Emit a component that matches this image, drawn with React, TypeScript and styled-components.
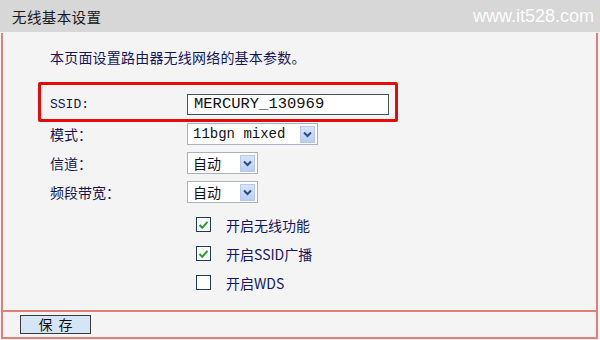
import React from 'react';
import styled, { createGlobalStyle } from 'styled-components';

const GlobalStyle = createGlobalStyle`
  html, body {
    margin: 0;
    padding: 0;
    background: #f4f4f4;
  }
  * {
    box-sizing: border-box;
  }
`;

const Page = styled.div`
  width: 600px;
  height: 340px;
  background: #f4f4f4;
  font-family: "Noto Sans CJK SC", "Noto Sans", sans-serif;
  font-size: 14px;
  color: #1b1b5c;
  display: flex;
  flex-direction: column;
  overflow: hidden;
`;

const TitleBar = styled.div`
  height: 32px;
  flex: none;
  background: #d7d7d7;
  display: flex;
  align-items: center;
  justify-content: space-between;
  padding: 0 6px 0 12px;
`;

const Title = styled.span`
  font-size: 14.5px;
  color: #1a1a1a;
  letter-spacing: 0.4px;
`;

const Watermark = styled.span`
  font-family: "Liberation Sans", Arial, sans-serif;
  font-size: 18px;
  color: #ffffff;
  opacity: 0.95;
`;

const Panel = styled.div`
  flex: 1;
  margin: 1px 2px 1px 1px;
  border-left: 2px solid #e08078;
  border-right: 2px solid #e08078;
  display: flex;
  flex-direction: column;
`;

const Content = styled.div`
  flex: 1;
  padding: 14px 0 0 35px;
`;

const Intro = styled.div`
  line-height: 20px;
  padding-left: 12px;
  letter-spacing: 0.2px;
  color: #16165a;
`;

const Highlight = styled.div`
  margin-top: 15px;
  width: 360px;
  border: 3px solid #e60a0a;
  border-radius: 2px;
  padding: 9px 0 4px 9px;
`;

const Row = styled.div<{ $h?: number }>`
  display: grid;
  grid-template-columns: 137px auto;
  align-items: start;
  height: ${(p) => p.$h ?? 29}px;
`;

const Rows = styled.div`
  padding-left: 12px;
  padding-top: 1px;
`;

const Label = styled.span<{ $mono?: boolean }>`
  font-family: ${(p) =>
    p.$mono ? '"Liberation Mono", monospace' : '"Noto Sans CJK SC", sans-serif'};
  font-size: ${(p) => (p.$mono ? 13 : 14)}px;
  line-height: ${(p) => (p.$mono ? 21 : 22)}px;
  color: #141450;
`;

const TextInput = styled.div`
  width: 202px;
  height: 21px;
  border: 1px solid #3e5656;
  background: #ffffff;
  font-family: "Liberation Mono", monospace;
  font-size: 15.5px;
  line-height: 19px;
  padding-left: 6px;
  color: #111;
`;

const Select = styled.div<{ $w: number }>`
  width: ${(p) => p.$w}px;
  height: 22px;
  border: 1px solid #a9b3bf;
  background: #ffffff;
  display: flex;
  align-items: center;
  justify-content: space-between;
  padding: 0 2px 0 5px;
`;

const SelectText = styled.span<{ $mono?: boolean }>`
  font-family: ${(p) =>
    p.$mono ? '"Liberation Mono", monospace' : '"Noto Sans CJK SC", sans-serif'};
  font-size: 14px;
  color: #111;
`;

const ArrowBox = styled.span`
  width: 15px;
  height: 17px;
  background: linear-gradient(#d9e4fb, #b8cdf5);
  border: 1px solid #b7c8ea;
  display: flex;
  align-items: center;
  justify-content: center;
`;

const Checks = styled.div`
  padding: 0 0 0 158px;
`;

const CheckRow = styled.div`
  display: flex;
  align-items: center;
  height: 29px;
  gap: 15px;
`;

const Box = styled.span`
  width: 15px;
  height: 15px;
  border: 1px solid #1f3b57;
  background: #ffffff;
  display: flex;
  align-items: center;
  justify-content: center;
`;

const CheckLabel = styled.span`
  font-size: 14px;
  color: #16165e;
`;

const Footer = styled.div`
  flex: none;
  height: 29px;
  border-top: 2px solid #e08078;
  border-bottom: 2px solid #e08078;
  display: flex;
  align-items: center;
  padding-left: 17px;
`;

const SaveButton = styled.button`
  width: 71px;
  height: 19px;
  background: #d3e5f7;
  border: 1px solid #3a3a3a;
  border-radius: 0;
  font-family: "Noto Sans CJK SC", sans-serif;
  font-size: 14px;
  line-height: 17px;
  color: #111;
  padding: 0;
  letter-spacing: 6px;
  text-indent: 6px;
`;

const Chevron = () => (
  <svg width="9" height="7" viewBox="0 0 9 7">
    <path d="M1 1.5 L4.5 5 L8 1.5" fill="none" stroke="#2b4a8c" strokeWidth="2" />
  </svg>
);

const Tick = () => (
  <svg width="11" height="10" viewBox="0 0 11 10">
    <path d="M1.5 5 L4.2 7.8 L9.5 1.8" fill="none" stroke="#22a02a" strokeWidth="2" />
  </svg>
);

const options = [
  { label: '开启无线功能', checked: true },
  { label: '开启SSID广播', checked: true },
  { label: '开启WDS', checked: false },
];

const App: React.FC = () => {
  return (
    <Page>
      <GlobalStyle />
      <TitleBar>
        <Title>无线基本设置</Title>
        <Watermark>www.it528.com</Watermark>
      </TitleBar>
      <Panel>
        <Content>
          <Intro>本页面设置路由器无线网络的基本参数。</Intro>
          <Highlight>
            <Row $h={21}>
              <Label $mono>SSID:</Label>
              <TextInput>MERCURY_130969</TextInput>
            </Row>
          </Highlight>
          <Rows>
            <Row>
              <Label>模式：</Label>
              <Select $w={131}>
                <SelectText $mono>11bgn mixed</SelectText>
                <ArrowBox><Chevron /></ArrowBox>
              </Select>
            </Row>
            <Row>
              <Label>信道：</Label>
              <Select $w={71}>
                <SelectText>自动</SelectText>
                <ArrowBox><Chevron /></ArrowBox>
              </Select>
            </Row>
            <Row>
              <Label>频段带宽：</Label>
              <Select $w={71}>
                <SelectText>自动</SelectText>
                <ArrowBox><Chevron /></ArrowBox>
              </Select>
            </Row>
          </Rows>
          <Checks>
            {options.map((o) => (
              <CheckRow key={o.label}>
                <Box>{o.checked && <Tick />}</Box>
                <CheckLabel>{o.label}</CheckLabel>
              </CheckRow>
            ))}
          </Checks>
        </Content>
        <Footer>
          <SaveButton type="button">保存</SaveButton>
        </Footer>
      </Panel>
    </Page>
  );
};

export default App;
